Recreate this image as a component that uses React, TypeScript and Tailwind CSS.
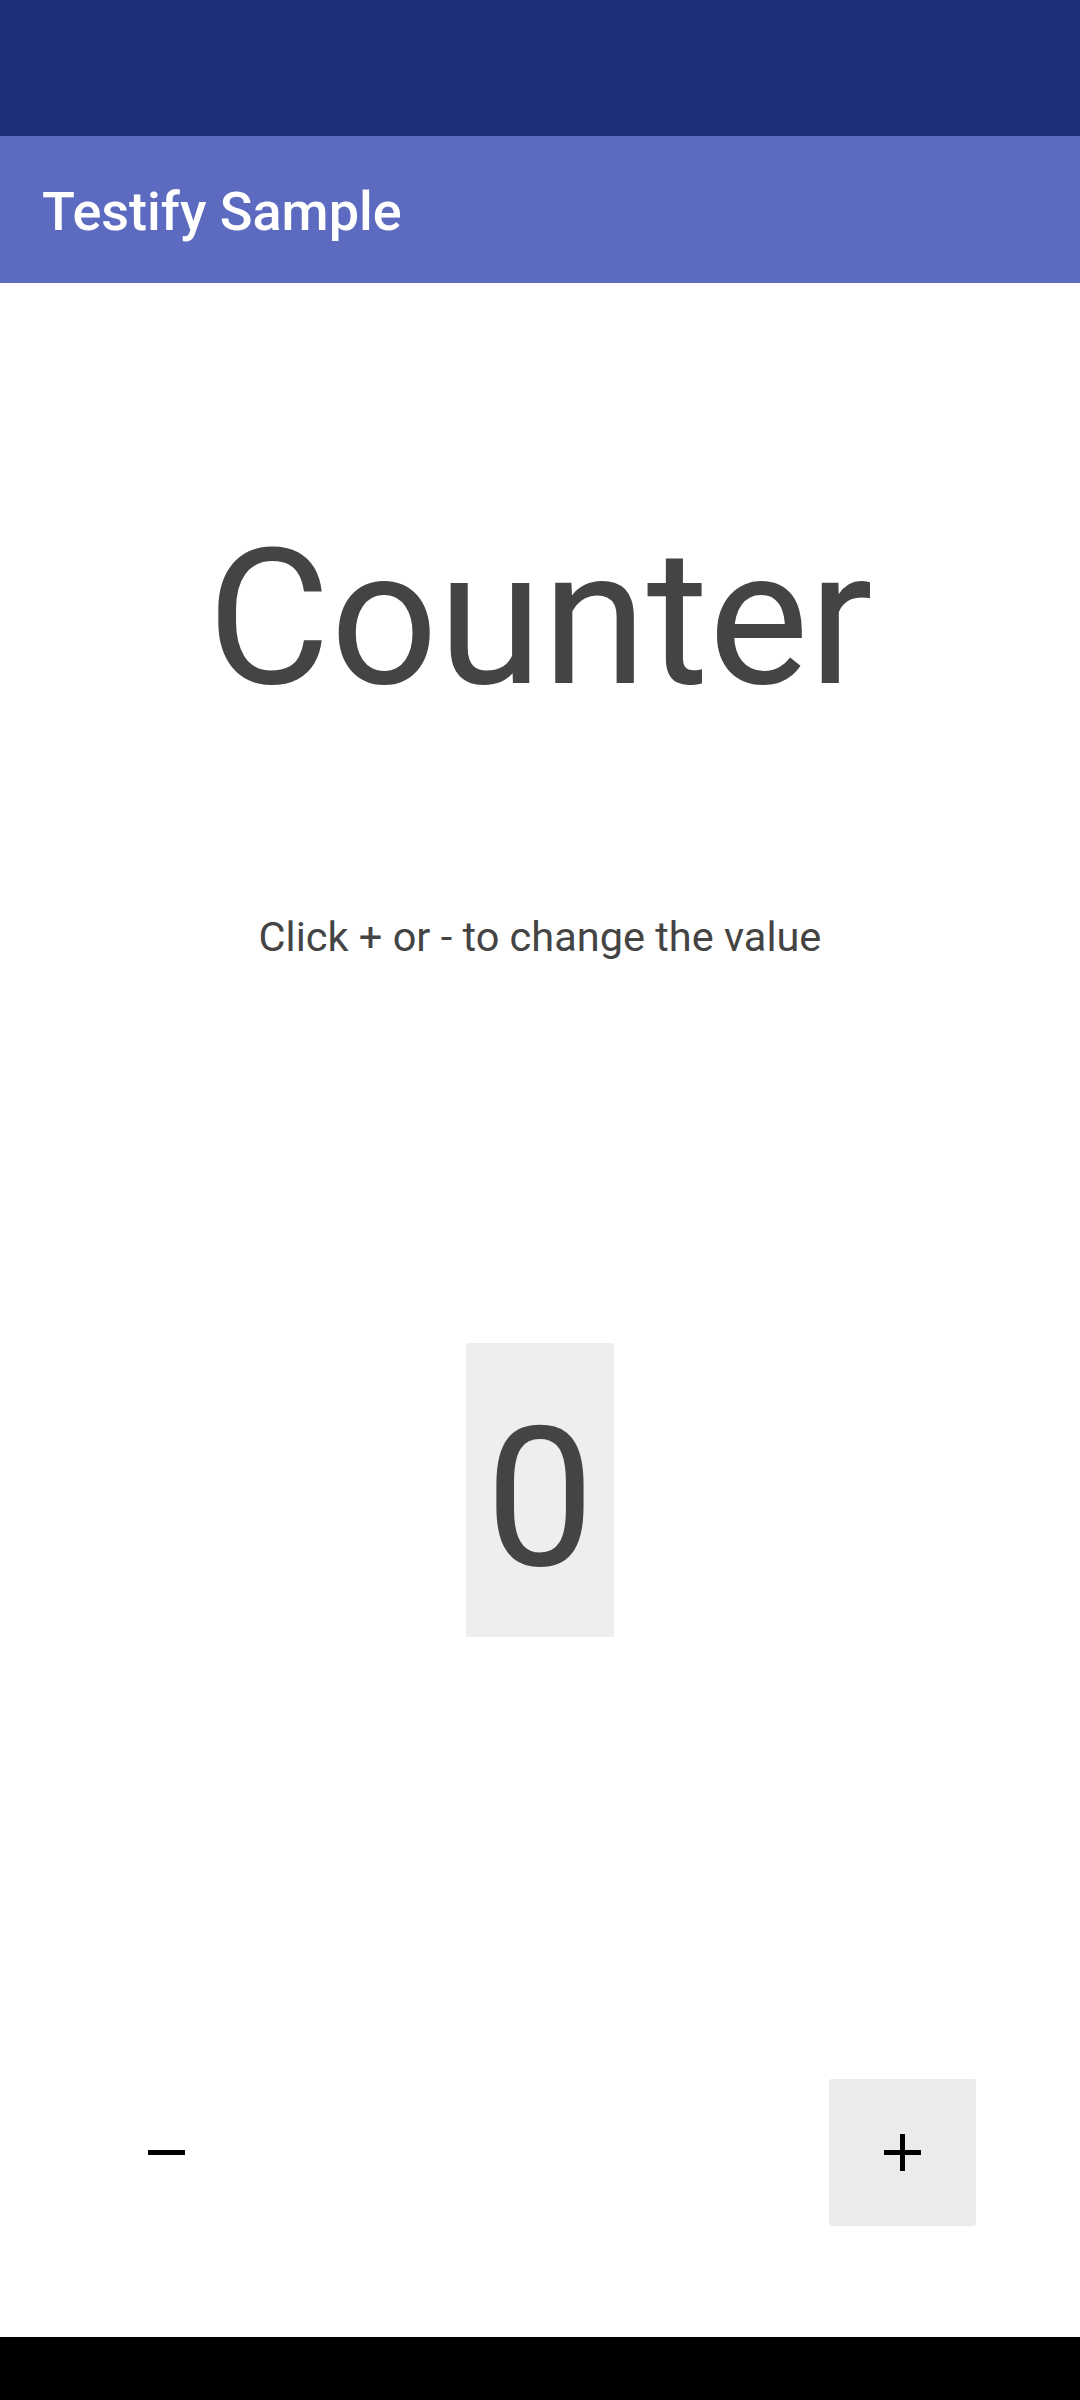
import { useState } from 'react';

const MinusIcon = () => (
  <svg width="37" height="5" viewBox="0 0 37 5">
    <rect x="0" y="0" width="37" height="5" fill="#000" />
  </svg>
);

const PlusIcon = () => (
  <svg width="37" height="37" viewBox="0 0 37 37">
    <rect x="0" y="16" width="37" height="5" fill="#000" />
    <rect x="16" y="0" width="5" height="37" fill="#000" />
  </svg>
);

const App = () => {
  const [count, setCount] = useState(0);

  return (
    <div
      className="flex h-[2400px] w-[1080px] flex-col bg-white"
      style={{ fontFamily: 'Roboto, "Noto Sans", sans-serif' }}
    >
      {/* status bar */}
      <div className="h-[136px] w-full bg-[#1f2f79]" />

      {/* app bar */}
      <div className="h-[147px] w-full bg-[#5c6bc0] pl-[42px] pt-[49px]">
        <h1 className="text-[54px] font-medium leading-none text-white">
          Testify Sample
        </h1>
      </div>

      <div className="flex flex-1 flex-col items-center">
        <h2 className="mt-[241px] h-[189px] text-[189px] font-normal leading-none text-[#444444]">
          Counter
        </h2>
        <p className="mt-[203px] h-[42px] text-[41.5px] leading-none text-[#444444]">
          Click + or - to change the value
        </p>

        <div className="mt-[385px] flex h-[294px] w-[148px] justify-center bg-[#eeeeee] pt-[59px]">
          <span className="text-[194px] leading-none text-[#444444]">
            {count}
          </span>
        </div>

        <div className="mt-[442px] flex w-full justify-between pl-[93px] pr-[104px]">
          <button
            className="flex h-[147px] w-[147px] items-center justify-center"
            onClick={() => setCount(count - 1)}
          >
            <MinusIcon />
          </button>
          <button
            className="flex h-[147px] w-[147px] items-center justify-center rounded-[3px] bg-[#ebebeb]"
            onClick={() => setCount(count + 1)}
          >
            <PlusIcon />
          </button>
        </div>
      </div>

      {/* nav bar */}
      <div className="h-[63px] w-full bg-black" />
    </div>
  );
};

export default App;
